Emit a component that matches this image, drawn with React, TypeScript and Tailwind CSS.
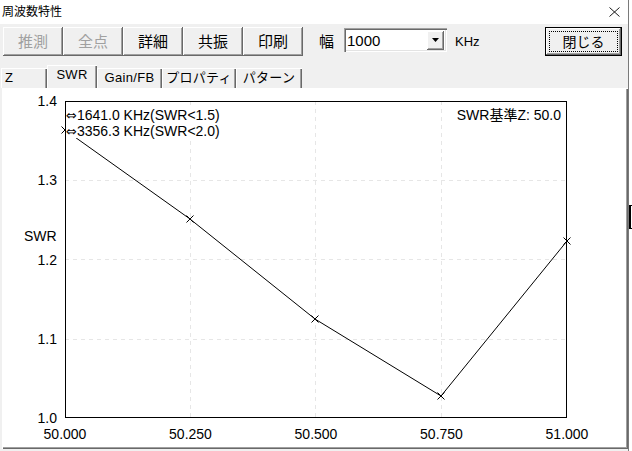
import React from "react";

const raised =
  "bg-[#f0f0f0] shadow-[inset_-1px_-1px_0_#696969,inset_1px_1px_0_#ffffff,inset_-2px_-2px_0_#a0a0a0,inset_2px_2px_0_#f0f0f0]";

function ToolButton({ label, disabled }: { label: string; disabled?: boolean }) {
  return (
    <div
      className={`w-[60px] h-[29px] flex items-center justify-center text-[15px] leading-none ${raised} ${
        disabled ? "text-[#a0a0a0]" : "text-black"
      }`}
    >
      {label}
    </div>
  );
}

function Tab({ label, w, selected }: { label: string; w: string; selected?: boolean }) {
  return (
    <div
      className={`${w} ${
        selected ? "h-[23px] pt-[2px]" : "h-[20px] pt-[2px]"
      } flex items-start justify-center text-[13px] tracking-[0.3px] leading-[16px] bg-[#f0f0f0] shadow-[inset_1px_1px_0_#ffffff,inset_-1px_0_0_#696969,inset_-2px_0_0_#a0a0a0]`}
    >
      {label}
    </div>
  );
}

function Chart() {
  const xs = [65, 190.5, 316, 441.5, 567];
  const ys = [101, 180.25, 259.5, 338.75, 418];
  const pts: [number, number][] = [
    [65, 130],
    [190, 219],
    [315, 319],
    [441, 396],
    [567, 241],
  ];
  const font = "'Liberation Sans','Noto Sans CJK JP',sans-serif";
  const arrowFont = "'DejaVu Sans',sans-serif";
  return (
    <svg width={626} height={361} className="block">
      <g transform="translate(-2,-88)" fontFamily={font} fontSize={14} fill="#000">
        {/* grid */}
        {[190, 315, 441].map((x) => (
          <line key={"v" + x} x1={x + 0.5} y1={101} x2={x + 0.5} y2={418} stroke="#e6e6e6" strokeDasharray="4 4" shapeRendering="crispEdges" />
        ))}
        {[180, 259, 339].map((y) => (
          <line key={"h" + y} x1={65} y1={y + 0.5} x2={567} y2={y + 0.5} stroke="#e6e6e6" strokeDasharray="4 4" shapeRendering="crispEdges" />
        ))}
        <rect x={65.5} y={101.5} width={501} height={316} fill="none" stroke="#000" shapeRendering="crispEdges" />
        <polyline points={pts.map((p) => p.join(",")).join(" ")} fill="none" stroke="#000" strokeWidth={1} />
        {pts.map(([x, y], i) => (
          <g key={i} stroke="#000" strokeWidth={1}>
            <line x1={x - 3.5} y1={y - 3.5} x2={x + 3.5} y2={y + 3.5} />
            <line x1={x - 3.5} y1={y + 3.5} x2={x + 3.5} y2={y - 3.5} />
          </g>
        ))}
        {/* info text with opaque background */}
        <rect x={66} y={107} width={157} height={31} fill="#fff" />
        <text x={66} y={115} dominantBaseline="central">
          <tspan fontFamily={arrowFont} fontSize={13}>⇔</tspan>1641.0 KHz(SWR&lt;1.5)
        </text>
        <text x={66} y={131} dominantBaseline="central">
          <tspan fontFamily={arrowFont} fontSize={13}>⇔</tspan>3356.3 KHz(SWR&lt;2.0)
        </text>
        <text x={561} y={115} textAnchor="end" dominantBaseline="central">SWR基準Z: 50.0</text>
        {/* y labels */}
        {["1.4", "1.3", "1.2", "1.1", "1.0"].map((t, i) => (
          <text key={t} x={57} y={ys[i]} textAnchor="end" dominantBaseline="central">
            {t}
          </text>
        ))}
        <text x={24} y={236} dominantBaseline="central">SWR</text>
        {["50.000", "50.250", "50.500", "50.750", "51.000"].map((t, i) => (
          <text key={t} x={xs[i]} y={434} textAnchor="middle" dominantBaseline="central">
            {t}
          </text>
        ))}
      </g>
    </svg>
  );
}

export default function App() {
  return (
    <div className="w-[632px] h-[451px] flex bg-[#f0f0f0] overflow-hidden font-['Liberation_Sans','Noto_Sans_CJK_JP',sans-serif] text-black">
      <div className="w-[628px] h-[451px] flex flex-col">
        {/* title bar */}
        <div className="h-[24px] bg-white flex items-center justify-between pl-[2px] pr-[8px]">
          <span className="text-[12px] leading-none">周波数特性</span>
          <svg width={11} height={10} viewBox="0 0 11 10">
            <line x1={0.5} y1={0.5} x2={10.5} y2={9.5} stroke="#000" strokeWidth={0.9} />
            <line x1={0.5} y1={9.5} x2={10.5} y2={0.5} stroke="#000" strokeWidth={0.9} />
          </svg>
        </div>
        {/* toolbar */}
        <div className="h-[41px] flex items-start pt-[3px] pl-[3px] pr-[6px]">
          <ToolButton label="推測" disabled />
          <ToolButton label="全点" disabled />
          <ToolButton label="詳細" />
          <ToolButton label="共振" />
          <ToolButton label="印刷" />
          <div className="ml-[16px] h-[29px] flex items-center text-[15px] leading-none">幅</div>
          <div className="ml-[10px] mt-[1px] w-[103px] h-[24px] bg-white flex items-center shadow-[inset_1px_1px_0_#a0a0a0,inset_2px_2px_0_#696969,inset_-1px_-1px_0_#ffffff,inset_-2px_-2px_0_#e3e3e3] pl-[3px] pr-[3px]">
            <span className="flex-1 text-[15px] leading-none">1000</span>
            <div className={`w-[17px] h-[19px] flex items-center justify-center ${raised}`}>
              <svg width={7} height={4} viewBox="0 0 7 4">
                <polygon points="0,0 7,0 3.5,4" fill="#000" />
              </svg>
            </div>
          </div>
          <div className="ml-[8px] h-[29px] flex items-center text-[13px] leading-none">KHz</div>
          <div className="ml-auto w-[77px] h-[29px] p-[1px] bg-black">
            <div className={`w-full h-full p-[3px] ${raised}`}>
              <div className="w-full h-full border border-dotted border-black flex items-center justify-center text-[14px] leading-none">
                閉じる
              </div>
            </div>
          </div>
        </div>
        {/* tabs */}
        <div className="h-[23px] flex items-end pl-[1px]">
          <Tab label="Z" w="w-[46px] justify-start pl-[4px]" />
          <Tab label="SWR" w="w-[50px]" selected />
          <Tab label="Gain/FB" w="w-[65px]" />
          <Tab label="プロパティ" w="w-[74px]" />
          <Tab label="パターン" w="w-[66px]" />
        </div>
        {/* panel */}
        <div className="ml-[2px] w-[626px] h-[361px] bg-white shadow-[inset_1px_1px_0_#ffffff,inset_-1px_-1px_0_#696969,inset_-2px_-2px_0_#a0a0a0]">
          <Chart />
        </div>
      </div>
      <div className="w-[1px] h-[451px] bg-[#7a7a7a]" />
      <div className="flex-1 h-[451px] bg-white flex flex-col pt-[205px]">
        <div className="w-[3px] h-[24px] border-l-2 border-t border-b border-black" />
      </div>
    </div>
  );
}
